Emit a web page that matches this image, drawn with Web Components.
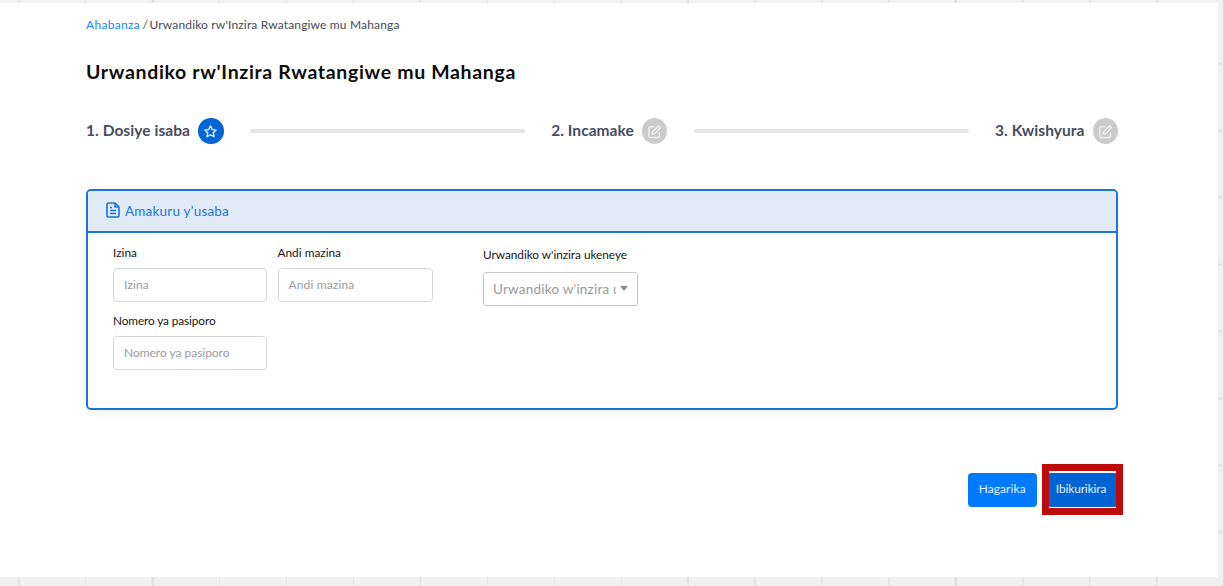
<!DOCTYPE html>
<html lang="rw">
<head>
<meta charset="utf-8">
<title>Urwandiko rw'Inzira</title>
<style>
  body {
    margin: 0;
    font-family: Lato, "Liberation Sans", sans-serif;
  }
</style>
</head>
<body>
<app-page>
  <bread-crumb></bread-crumb>
  <page-title></page-title>
  <step-list></step-list>
  <form-card heading="Amakuru y’usaba" width="104">
    <form-column>
      <form-field label="Izina" label-width="24" text-width="25"></form-field>
      <form-field label="Andi mazina" label-width="63.5" text-width="66"></form-field>
      <form-field label="Nomero ya pasiporo" label-width="102.5" text-width="105.5"></form-field>
    </form-column>
    <select-field label="Urwandiko w'inzira ukeneye" label-width="144" text-width="171"></select-field>
  </form-card>
  <button-row></button-row>
</app-page>

<script>
// Base class, puts the template in the shadow root
class Base extends HTMLElement {
  connectedCallback() {
    if (!this.shadowRoot) {
      this.attachShadow({ mode: 'open' });
      this.shadowRoot.innerHTML = this.template();
    }
  }
}

// Text tracked out to a given width
class FitText extends Base {
  template() {
    return `
      <style>
        :host { display: inline-flex; flex: none; white-space: nowrap; }
        span { flex: none; }
      </style>
      <span><slot></slot></span>
    `;
  }

  connectedCallback() {
    super.connectedCallback();
    const span = this.shadowRoot.querySelector('span');
    const width = Number(this.getAttribute('width'));
    const natural = span.getBoundingClientRect().width;
    span.style.letterSpacing = (width - natural) / this.textContent.length + 'px';
    this.style.width = width + 'px';
  }
}

class AppPage extends Base {
  template() {
    return `
      <style>
        :host {
          display: block;
          box-sizing: border-box;
          height: 586px;
          padding: 3px 6px 9.5px 0;
          overflow: hidden;
          background:
            repeating-linear-gradient(90deg, #dedede 0 1.5px, transparent 1.5px 267.8px) 151.7px 0,
            repeating-linear-gradient(90deg, #e5e5e5 0 1.5px, transparent 1.5px 66.95px) 17.8px 0,
            repeating-linear-gradient(#e5e5e5 0 1.5px, transparent 1.5px 66.95px) 0 62.7px,
            #f1f1f1;
          background-size: 1339px 586px, 1339px 586px, 1224px 602.55px, auto;
        }
        main {
          display: flex;
          flex-direction: column;
          box-sizing: border-box;
          height: 573.5px;
          padding: 14px 100px 0 86px;
          background: #fff;
        }
      </style>
      <main><slot></slot></main>
    `;
  }
}

class BreadCrumb extends Base {
  template() {
    return `
      <style>
        :host { display: flex; height: 16px; line-height: 16px; font-size: 12px; color: #444a55; }
        a { color: #1a86ff; text-decoration: none; }
        .sep { width: 9.5px; padding-left: 2.5px; box-sizing: border-box; }
      </style>
      <a><fit-text width="54">Ahabanza</fit-text></a>
      <span class="sep">/</span>
      <fit-text width="250">Urwandiko rw'Inzira Rwatangiwe mu Mahanga</fit-text>
    `;
  }
}

class PageTitle extends Base {
  template() {
    return `
      <style>
        :host { display: block; margin-top: 26px; }
        h1 { display: flex; margin: 0; font-size: 19.5px; line-height: 26px; font-weight: 700; color: #0c0c0c; }
      </style>
      <h1><fit-text width="430">Urwandiko rw'Inzira Rwatangiwe mu Mahanga</fit-text></h1>
    `;
  }
}

const star = '<path d="M12 3l2.8 5.800 6.2.9-4.5 4.4 1.1 6.3L12 17.4l-5.6 3 1.100-6.3L3 9.7l6.2-.9z"/>';
const edit = '<path d="M12 4.5H4.5A1.5 1.5 0 0 0 3 6v14a1.5 1.5 0 0 0 1.5 1.5h14A1.5 1.5 0 0 0 20 20V13"/><path d="M9 12.5L18.5 3l3 3L12 15.5l-3.7.7z"/>';

class StepItem extends Base {
  template() {
    const active = this.hasAttribute('active');
    return `
      <style>
        :host { display: flex; align-items: center; gap: 8px; height: 26px; }
        .text { display: flex; font-size: 15.5px; font-weight: 700; line-height: 20px; color: #474c61; margin-top: -2px; }
        .badge {
          display: flex;
          align-items: center;
          justify-content: center;
          width: 25.5px;
          height: 25.5px;
          border-radius: 50%;
          background: ${active ? '#0366d6' : '#cbcbcb'};
        }
        svg { width: 15px; height: 15px; fill: none; stroke: ${active ? '#e3eefb' : '#f0f0f0'}; stroke-width: 2.2; stroke-linejoin: round; }
      </style>
      <span class="text"><fit-text width="${this.getAttribute('width')}">${this.getAttribute('label')}</fit-text></span>
      <span class="badge"><svg viewBox="0 0 24 24">${active ? star : edit}</svg></span>
    `;
  }
}

class StepList extends Base {
  template() {
    return `
      <style>
        :host { display: flex; align-items: center; gap: 26.5px; margin-top: 33px; }
        .line { flex: 1; height: 4px; border-radius: 2px; background: #e5e5e5; }
      </style>
      <step-item active label="1. Dosiye isaba" width="104"></step-item>
      <div class="line"></div>
      <step-item label="2. Incamake" width="82.5"></step-item>
      <div class="line"></div>
      <step-item label="3. Kwishyura" width="89.5"></step-item>
    `;
  }
}

class FormCard extends Base {
  template() {
    return `
      <style>
        :host {
          display: block;
          box-sizing: border-box;
          height: 221px;
          margin-top: 45px;
          border: 2px solid #1a75d9;
          border-radius: 5px;
          box-shadow: 0 6px 10px -3px rgba(0, 0, 0, 0.06);
        }
        header {
          display: flex;
          align-items: center;
          gap: 5px;
          height: 40px;
          padding-left: 18px;
          border-bottom: 2px solid #1a75d9;
          border-radius: 3px 3px 0 0;
          background: #e0ebf7;
          color: #2076d8;
          font-size: 13.5px;
        }
        svg { width: 14px; height: 16px; margin-top: -3px; fill: none; stroke: #1a75d9; stroke-width: 1.6; stroke-linejoin: round; }
        .body { display: flex; gap: 50.5px; padding: 10.5px 25px; }
      </style>
      <header>
        <svg viewBox="0 0 14 16"><path d="M2 1h7l4 4v9a1 1 0 0 1-1 1H2a1 1 0 0 1-1-1V2a1 1 0 0 1 1-1z"/><path d="M9 1v4h4M4 5.5h2M4 8.5h6M4 11.5h6"/></svg>
        <fit-text width="${this.getAttribute('width')}">${this.getAttribute('heading')}</fit-text>
      </header>
      <div class="body"><slot></slot></div>
    `;
  }
}

class FormColumn extends Base {
  template() {
    return `
      <style>
        :host { display: grid; grid-template-columns: 154px 155px; gap: 10px 10.5px; align-content: start; }
      </style>
      <slot></slot>
    `;
  }
}

class FormField extends Base {
  template() {
    const label = this.getAttribute('label');
    return `
      <style>
        :host { display: block; height: 58px; }
        label { display: flex; height: 24px; line-height: 17px; font-size: 11.8px; color: #151515; }
        .input {
          display: flex;
          box-sizing: border-box;
          height: 34px;
          padding-left: 10px;
          border: 1px solid #d5d9de;
          border-radius: 4px;
          line-height: 32px;
          font-size: 12px;
          color: #9b9b9b;
        }
      </style>
      <label><fit-text width="${this.getAttribute('label-width')}">${label}</fit-text></label>
      <div class="input"><fit-text width="${this.getAttribute('text-width')}">${label}</fit-text></div>
    `;
  }
}

class SelectField extends Base {
  template() {
    const label = this.getAttribute('label');
    return `
      <style>
        :host { display: block; width: 155px; padding-top: 2px; }
        label { display: flex; height: 26px; line-height: 18px; font-size: 11.8px; color: #151515; }
        .select {
          display: flex;
          align-items: center;
          gap: 4px;
          box-sizing: border-box;
          height: 34px;
          padding-left: 9px;
          border: 1px solid #c8c8c8;
          border-radius: 3px;
          font-size: 13.5px;
          color: #9b9b9b;
        }
        .value { display: flex; width: 123px; overflow: hidden; line-height: 30px; }
        .arrow { border: 4.5px solid transparent; border-top: 5px solid #8c8c8c; border-bottom: 0; }
      </style>
      <label><fit-text width="${this.getAttribute('label-width')}">${label}</fit-text></label>
      <div class="select">
        <div class="value"><fit-text width="${this.getAttribute('text-width')}">${label}</fit-text></div>
        <div class="arrow"></div>
      </div>
    `;
  }
}

class ButtonRow extends Base {
  template() {
    return `
      <style>
        :host { display: flex; justify-content: flex-end; gap: 10px; margin-top: 63px; }
        button {
          display: flex;
          justify-content: center;
          width: 69.5px;
          height: 34px;
          padding: 0;
          border: 0;
          border-radius: 4px;
          background: #007bff;
          color: #e6f1ff;
          font: 11.8px/32px Lato, sans-serif;
        }
        .next { position: relative; width: 71px; }
        .next button { width: 71px; padding-right: 3px; background: #0063d3; }
        .mark { position: absolute; inset: -9px -5px -8px -5px; border: 7px solid #bf0a0a; }
      </style>
      <button><fit-text width="47">Hagarika</fit-text></button>
      <div class="next">
        <button><fit-text width="50.5">Ibikurikira</fit-text></button>
        <div class="mark"></div>
      </div>
    `;
  }
}

customElements.define('fit-text', FitText);
customElements.define('app-page', AppPage);
customElements.define('bread-crumb', BreadCrumb);
customElements.define('page-title', PageTitle);
customElements.define('step-item', StepItem);
customElements.define('step-list', StepList);
customElements.define('form-card', FormCard);
customElements.define('form-column', FormColumn);
customElements.define('form-field', FormField);
customElements.define('select-field', SelectField);
customElements.define('button-row', ButtonRow);
</script>
</body>
</html>
